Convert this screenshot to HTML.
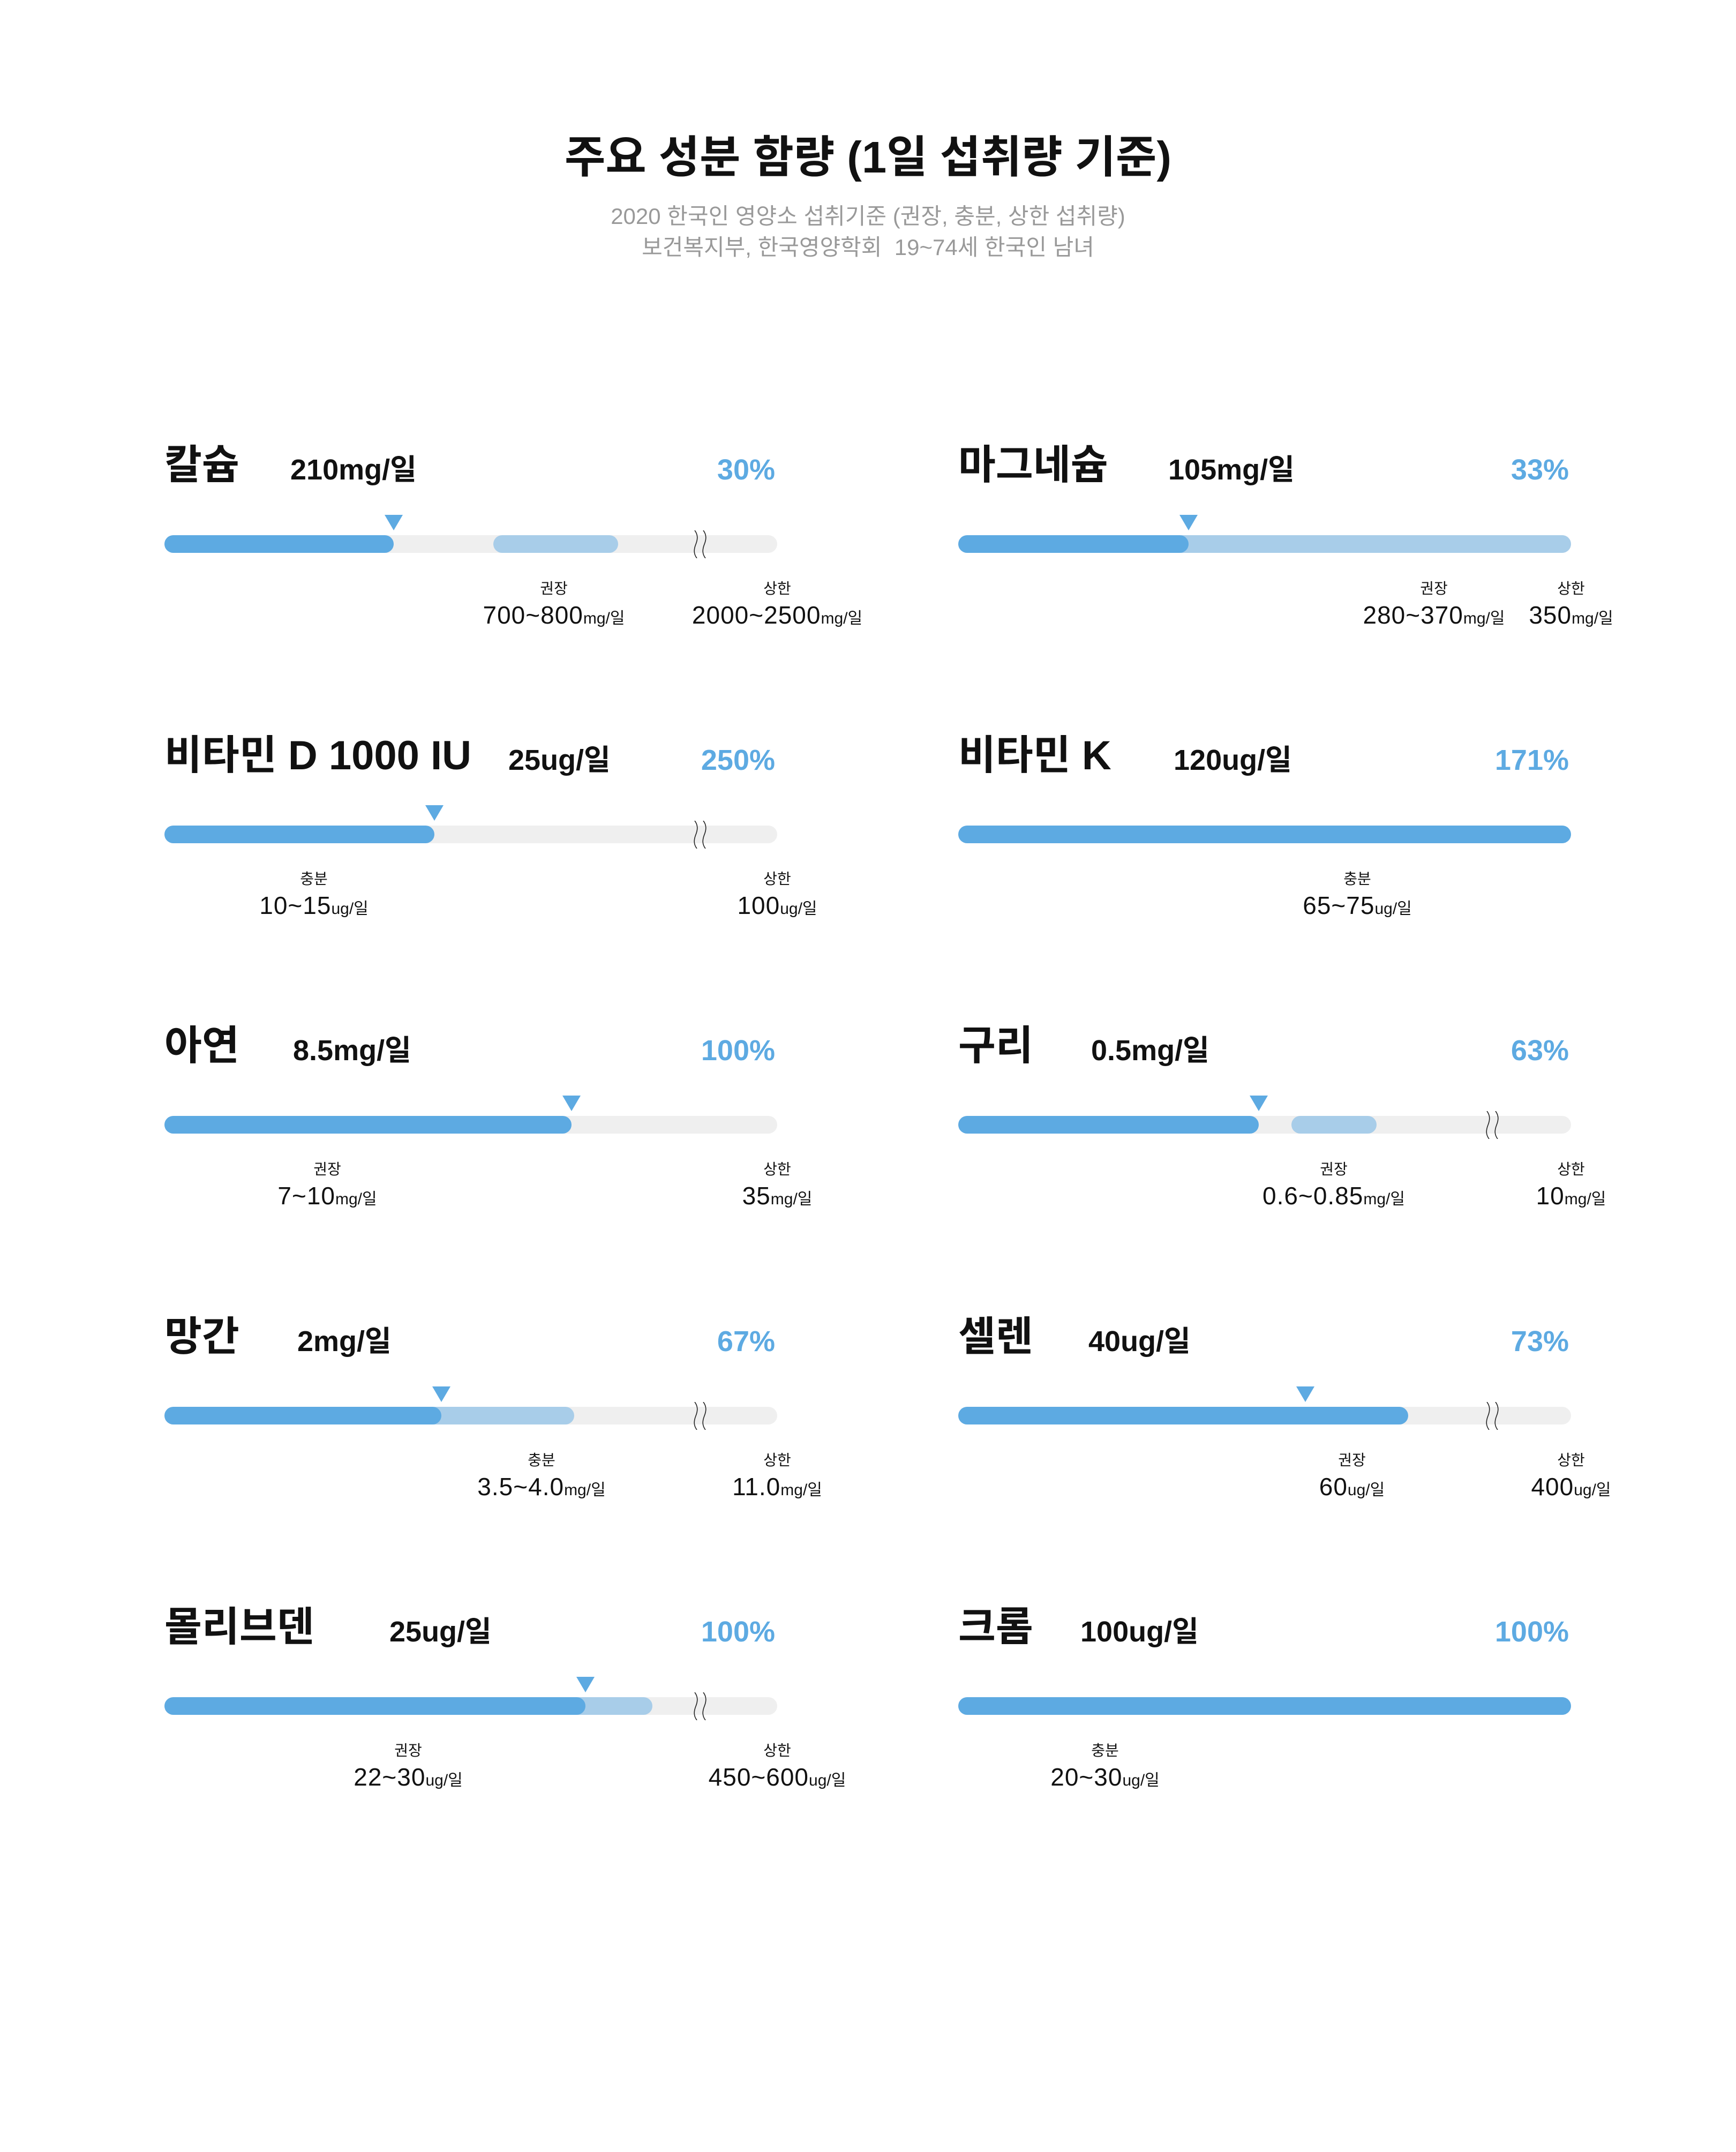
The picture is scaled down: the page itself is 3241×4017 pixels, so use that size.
<!DOCTYPE html>
<html lang="ko">
<head>
<meta charset="utf-8">
<style>
*{margin:0;padding:0;box-sizing:border-box}
html,body{width:3241px;height:4017px;background:#fff;overflow:hidden}
body{position:relative;font-family:"Liberation Sans","Noto Sans CJK KR",sans-serif;color:#111}
.title{position:absolute;left:0;width:3241px;top:252px;text-align:center;font-size:83px;font-weight:700;line-height:1;color:#111}
.sub{position:absolute;left:0;width:3241px;text-align:center;font-size:42px;line-height:1;color:#999}
.row{position:absolute;width:1144px;height:33px}
.name{position:absolute;left:0;top:-168px;font-size:76px;font-weight:700;line-height:1;white-space:nowrap;color:#111}
.amt{position:absolute;top:-149px;font-size:54px;font-weight:700;line-height:1;white-space:nowrap;color:#111}
.pct{position:absolute;right:4px;top:-149px;font-size:54px;font-weight:700;line-height:1;color:#5DAAE2;white-space:nowrap}
.track{position:absolute;left:0;top:0;width:1144px;height:33px;border-radius:17px;background:#EFEFEF}
.light{position:absolute;top:0;height:33px;border-radius:17px;background:#A8CDE9}
.fill{position:absolute;left:0;top:0;height:33px;border-radius:17px;background:#5DAAE2}
.tri{position:absolute;top:-38px;width:0;height:0;border-left:17px solid transparent;border-right:17px solid transparent;border-top:29px solid #5DAAE2;margin-left:-17px}
.brk{position:absolute;top:-9px;width:40px;height:52px;margin-left:-20px}
.lab{position:absolute;top:86px;transform:translateX(-50%);font-size:28px;line-height:1;white-space:nowrap;color:#111}
.val{position:absolute;top:126px;transform:translateX(-50%);font-size:46px;line-height:1;white-space:nowrap;color:#111;letter-spacing:1px}
.val small{font-size:30px;letter-spacing:0}
</style>
</head>
<body>
<div class="title">주요 성분 함량 (1일 섭취량 기준)</div>
<div class="sub" style="top:383px">2020 한국인 영양소 섭취기준 (권장, 충분, 상한 섭취량)</div>
<div class="sub" style="top:441px">보건복지부, 한국영양학회&nbsp; 19~74세 한국인 남녀</div>

<div class="row" style="left:307px;top:999px">
  <div class="name">칼슘</div>
  <div class="amt" style="left:235px">210mg/일</div>
  <div class="pct">30%</div>
  <div class="track"></div>
  <div class="light" style="left:614px;width:233px"></div>
  <div class="fill" style="width:428px"></div>
  <div class="tri" style="left:428px"></div>
  <svg class="brk" style="left:1001px" viewBox="0 0 40 52"><path d="M9 0 C15 8 15 16 11 26 C7 36 7 44 13 52" fill="none" stroke="#222" stroke-width="1.6"/><path d="M25 0 C31 8 31 16 27 26 C23 36 23 44 29 52" fill="none" stroke="#222" stroke-width="1.6"/></svg>
  <div class="lab" style="left:727px">권장</div>
  <div class="val" style="left:727px">700~800<small>mg/일</small></div>
  <div class="lab" style="left:1144px">상한</div>
  <div class="val" style="left:1144px">2000~2500<small>mg/일</small></div>
</div>

<div class="row" style="left:1789px;top:999px">
  <div class="name">마그네슘</div>
  <div class="amt" style="left:392px">105mg/일</div>
  <div class="pct">33%</div>
  <div class="track"></div>
  <div class="light" style="left:400px;width:744px"></div>
  <div class="fill" style="width:430px"></div>
  <div class="tri" style="left:430px"></div>
  <div class="lab" style="left:888px">권장</div>
  <div class="val" style="left:888px">280~370<small>mg/일</small></div>
  <div class="lab" style="left:1144px">상한</div>
  <div class="val" style="left:1144px">350<small>mg/일</small></div>
</div>

<div class="row" style="left:307px;top:1541px">
  <div class="name">비타민 D 1000 IU</div>
  <div class="amt" style="left:642px">25ug/일</div>
  <div class="pct">250%</div>
  <div class="track"></div>
  <div class="fill" style="width:504px"></div>
  <div class="tri" style="left:504px"></div>
  <svg class="brk" style="left:1001px" viewBox="0 0 40 52"><path d="M9 0 C15 8 15 16 11 26 C7 36 7 44 13 52" fill="none" stroke="#222" stroke-width="1.6"/><path d="M25 0 C31 8 31 16 27 26 C23 36 23 44 29 52" fill="none" stroke="#222" stroke-width="1.6"/></svg>
  <div class="lab" style="left:279px">충분</div>
  <div class="val" style="left:279px">10~15<small>ug/일</small></div>
  <div class="lab" style="left:1144px">상한</div>
  <div class="val" style="left:1144px">100<small>ug/일</small></div>
</div>

<div class="row" style="left:1789px;top:1541px">
  <div class="name">비타민 K</div>
  <div class="amt" style="left:402px">120ug/일</div>
  <div class="pct">171%</div>
  <div class="track"></div>
  <div class="fill" style="width:1144px"></div>
  <div class="lab" style="left:745px">충분</div>
  <div class="val" style="left:745px">65~75<small>ug/일</small></div>
</div>

<div class="row" style="left:307px;top:2083px">
  <div class="name">아연</div>
  <div class="amt" style="left:240px">8.5mg/일</div>
  <div class="pct">100%</div>
  <div class="track"></div>
  <div class="fill" style="width:760px"></div>
  <div class="tri" style="left:760px"></div>
  <div class="lab" style="left:304px">권장</div>
  <div class="val" style="left:304px">7~10<small>mg/일</small></div>
  <div class="lab" style="left:1144px">상한</div>
  <div class="val" style="left:1144px">35<small>mg/일</small></div>
</div>

<div class="row" style="left:1789px;top:2083px">
  <div class="name">구리</div>
  <div class="amt" style="left:248px">0.5mg/일</div>
  <div class="pct">63%</div>
  <div class="track"></div>
  <div class="light" style="left:622px;width:159px"></div>
  <div class="fill" style="width:561px"></div>
  <div class="tri" style="left:561px"></div>
  <svg class="brk" style="left:998px" viewBox="0 0 40 52"><path d="M9 0 C15 8 15 16 11 26 C7 36 7 44 13 52" fill="none" stroke="#222" stroke-width="1.6"/><path d="M25 0 C31 8 31 16 27 26 C23 36 23 44 29 52" fill="none" stroke="#222" stroke-width="1.6"/></svg>
  <div class="lab" style="left:701px">권장</div>
  <div class="val" style="left:701px">0.6~0.85<small>mg/일</small></div>
  <div class="lab" style="left:1144px">상한</div>
  <div class="val" style="left:1144px">10<small>mg/일</small></div>
</div>

<div class="row" style="left:307px;top:2626px">
  <div class="name">망간</div>
  <div class="amt" style="left:248px">2mg/일</div>
  <div class="pct">67%</div>
  <div class="track"></div>
  <div class="light" style="left:450px;width:315px"></div>
  <div class="fill" style="width:517px"></div>
  <div class="tri" style="left:517px"></div>
  <svg class="brk" style="left:1001px" viewBox="0 0 40 52"><path d="M9 0 C15 8 15 16 11 26 C7 36 7 44 13 52" fill="none" stroke="#222" stroke-width="1.6"/><path d="M25 0 C31 8 31 16 27 26 C23 36 23 44 29 52" fill="none" stroke="#222" stroke-width="1.6"/></svg>
  <div class="lab" style="left:704px">충분</div>
  <div class="val" style="left:704px">3.5~4.0<small>mg/일</small></div>
  <div class="lab" style="left:1144px">상한</div>
  <div class="val" style="left:1144px">11.0<small>mg/일</small></div>
</div>

<div class="row" style="left:1789px;top:2626px">
  <div class="name">셀렌</div>
  <div class="amt" style="left:243px">40ug/일</div>
  <div class="pct">73%</div>
  <div class="track"></div>
  <div class="fill" style="width:840px"></div>
  <div class="tri" style="left:648px"></div>
  <svg class="brk" style="left:998px" viewBox="0 0 40 52"><path d="M9 0 C15 8 15 16 11 26 C7 36 7 44 13 52" fill="none" stroke="#222" stroke-width="1.6"/><path d="M25 0 C31 8 31 16 27 26 C23 36 23 44 29 52" fill="none" stroke="#222" stroke-width="1.6"/></svg>
  <div class="lab" style="left:735px">권장</div>
  <div class="val" style="left:735px">60<small>ug/일</small></div>
  <div class="lab" style="left:1144px">상한</div>
  <div class="val" style="left:1144px">400<small>ug/일</small></div>
</div>

<div class="row" style="left:307px;top:3168px">
  <div class="name">몰리브덴</div>
  <div class="amt" style="left:420px">25ug/일</div>
  <div class="pct">100%</div>
  <div class="track"></div>
  <div class="light" style="left:700px;width:211px"></div>
  <div class="fill" style="width:786px"></div>
  <div class="tri" style="left:786px"></div>
  <svg class="brk" style="left:1001px" viewBox="0 0 40 52"><path d="M9 0 C15 8 15 16 11 26 C7 36 7 44 13 52" fill="none" stroke="#222" stroke-width="1.6"/><path d="M25 0 C31 8 31 16 27 26 C23 36 23 44 29 52" fill="none" stroke="#222" stroke-width="1.6"/></svg>
  <div class="lab" style="left:455px">권장</div>
  <div class="val" style="left:455px">22~30<small>ug/일</small></div>
  <div class="lab" style="left:1144px">상한</div>
  <div class="val" style="left:1144px">450~600<small>ug/일</small></div>
</div>

<div class="row" style="left:1789px;top:3168px">
  <div class="name">크롬</div>
  <div class="amt" style="left:228px">100ug/일</div>
  <div class="pct">100%</div>
  <div class="track"></div>
  <div class="fill" style="width:1144px"></div>
  <div class="lab" style="left:274px">충분</div>
  <div class="val" style="left:274px">20~30<small>ug/일</small></div>
</div>
</body>
</html>
